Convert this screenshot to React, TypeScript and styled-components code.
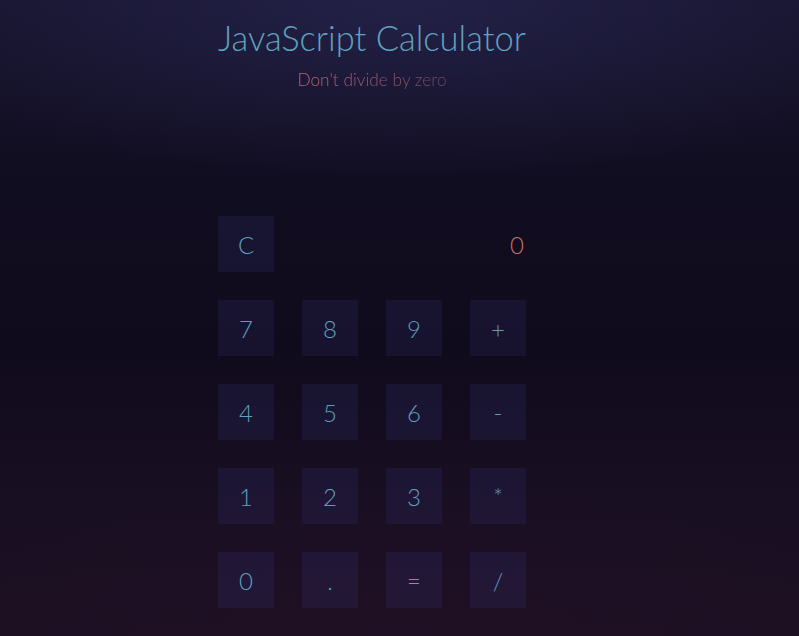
import { createGlobalStyle } from 'styled-components';
import styled from 'styled-components';

const keys = ['7', '8', '9', '+', '4', '5', '6', '-', '1', '2', '3', '*', '0', '.', '=', '/'];

const GlobalStyle = createGlobalStyle`
  html, body {
    margin: 0;
    height: 100%;
  }
  body {
    min-height: 636px;
    font-family: Lato, 'Liberation Sans', sans-serif;
    font-weight: 300;
    background:
      radial-gradient(ellipse 70% 28% at 50% 0%, rgba(36, 34, 74, 0.9), rgba(36, 34, 74, 0) 100%),
      radial-gradient(ellipse 60% 25% at 50% 100%, rgba(36, 16, 38, 0.5), rgba(36, 16, 38, 0) 100%),
      linear-gradient(180deg, #17142d 0%, #110d20 30%, #100b1c 55%, #190f22 80%, #1d1023 100%);
  }
`;

export default function App() {
  return (
    <>
      <GlobalStyle />
      <Page>
        <Column>
          <Title>JavaScript Calculator</Title>
          <Subtitle>Don't divide by zero</Subtitle>
          <Calculator>
            <DisplayRow>
              <Key>C</Key>
              <Display>0</Display>
            </DisplayRow>
            <Pad>
              {keys.map(k => (
                <Key key={k}>{k}</Key>
              ))}
            </Pad>
          </Calculator>
        </Column>
      </Page>
    </>
  );
}

const Page = styled.div`
  display: flex;
  justify-content: flex-start;
  padding: 17px 0 0 218px;
`;

const Column = styled.div`
  width: 308px;
  display: flex;
  flex-direction: column;
  align-items: center;
`;

const Title = styled.h1`
  margin: 0;
  font-size: 34.5px;
  font-weight: 300;
  line-height: 42px;
  color: #5ea2be;
  white-space: nowrap;
`;

const Subtitle = styled.div`
  margin-top: 10px;
  font-size: 17.3px;
  line-height: 22px;
  background: linear-gradient(90deg, #bb6b6e 0%, #9a5d6a 45%, #68485f 100%);
  -webkit-background-clip: text;
  background-clip: text;
  color: transparent;
`;

const Calculator = styled.div`
  width: 100%;
  margin-top: 125px;
  display: flex;
  flex-direction: column;
  gap: 28px;
`;

const DisplayRow = styled.div`
  display: flex;
  justify-content: space-between;
  align-items: center;
`;

const Display = styled.div`
  font-size: 24px;
  color: #c2716c;
  padding-right: 2px;
`;

const Pad = styled.div`
  display: grid;
  grid-template-columns: repeat(4, 56px);
  gap: 28px;
`;

const Key = styled.button`
  width: 56px;
  height: 56px;
  border: none;
  padding: 0;
  background: rgba(52, 50, 120, 0.22);
  color: #5e9fbd;
  font-family: Lato, 'Liberation Sans', sans-serif;
  font-weight: 300;
  font-size: 24px;
  cursor: pointer;
`;
